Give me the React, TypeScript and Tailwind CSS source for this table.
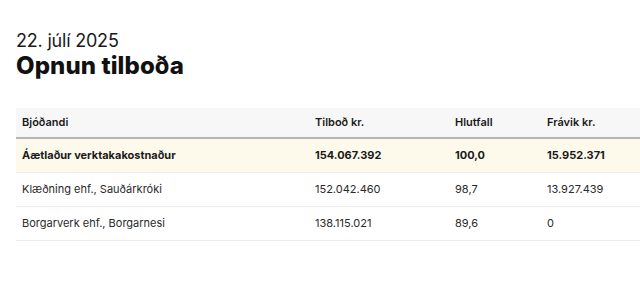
import React from "react";

const rows = [
  { name: "Áætlaður verktakakostnaður", bid: "154.067.392", pct: "100,0", dev: "15.952.371", hl: true },
  { name: "Klæðning ehf., Sauðárkróki", bid: "152.042.460", pct: "98,7", dev: "13.927.439" },
  { name: "Borgarverk ehf., Borgarnesi", bid: "138.115.021", pct: "89,6", dev: "0" },
];

export default function App() {
  return (
    <div className="w-[640px] h-[299px] overflow-hidden bg-white text-[#1a1a1a]" style={{ fontFamily: "Inter, 'Noto Sans', sans-serif" }}>
      <div className="pl-4 pt-[30px]">
        <div className="text-[18px] leading-[22px] font-normal tracking-[-0.2px]">22. júlí 2025</div>
        <div className="text-[24px] leading-[28px] font-extrabold tracking-[0.1px] text-[#111]">Opnun tilboða</div>
        <div className="w-[680px] mt-[28px] text-[11px]">
          <div className="grid grid-cols-[293px_140px_92px_1fr] bg-[#f7f7f7] border-b-2 border-[#b5b5b5] h-[31px] items-center font-semibold">
            <div className="pl-[6px]">Bjóðandi</div>
            <div className="pl-[6px]">Tilboð kr.</div>
            <div className="pl-[6px]">Hlutfall</div>
            <div className="pl-[6px]">Frávik kr.</div>
          </div>
          {rows.map((r) => (
            <div
              key={r.name}
              className={
                r.hl
                  ? "grid grid-cols-[293px_140px_92px_1fr] h-[34px] items-center border-b border-[#ececec] bg-[#fdfaec] font-bold"
                  : "grid grid-cols-[293px_140px_92px_1fr] h-[34px] items-center border-b border-[#ececec] text-[#2a2a2a]"
              }
            >
              <div className="pl-[6px]">{r.name}</div>
              <div className="pl-[6px]">{r.bid}</div>
              <div className="pl-[6px]">{r.pct}</div>
              <div className="pl-[6px]">{r.dev}</div>
            </div>
          ))}
        </div>
      </div>
    </div>
  );
}
